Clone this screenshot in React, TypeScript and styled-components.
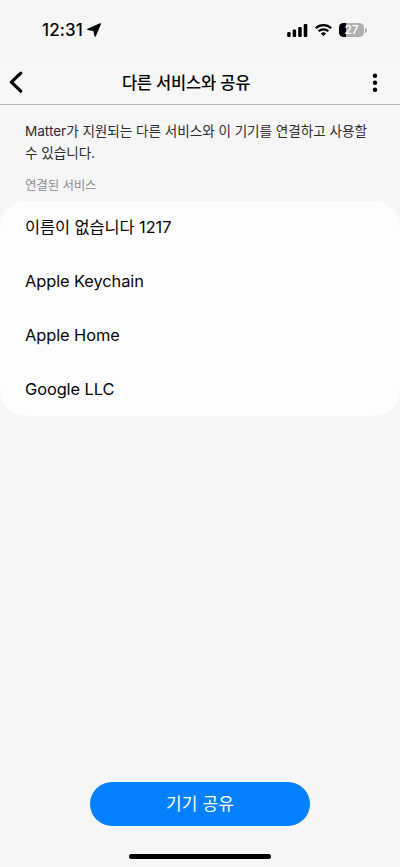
import React from "react";
import styled, { createGlobalStyle } from "styled-components";

const GlobalStyle = createGlobalStyle`
  * { box-sizing: border-box; }
  html, body { margin: 0; padding: 0; background: #f6f6f6; }
  body { font-family: Inter, "Noto Sans CJK KR", sans-serif; color: #050505; }
  button { font: inherit; color: inherit; border: 0; padding: 0; background: none; }
`;

const Screen = styled.div`
  width: 400px;
  height: 867px;
  display: flex;
  flex-direction: column;
  background: #f6f6f6;
  overflow: hidden;
`;

const StatusBar = styled.div`
  flex: none;
  height: 60px;
  padding: 0 33px 0 42px;
  display: flex;
  align-items: center;
  justify-content: space-between;
`;

const Clock = styled.div`
  display: flex;
  align-items: center;
  gap: 4px;
  font-size: 17px;
  font-weight: 500;
  letter-spacing: 0.1px;
  line-height: 20px;
`;

const Indicators = styled.div`
  display: flex;
  align-items: center;
  gap: 7px;
`;

const Battery = styled.div`
  display: flex;
  align-items: center;
  gap: 1px;
`;

const BatteryBody = styled.div`
  width: 25px;
  height: 14px;
  border-radius: 4.5px;
  background: linear-gradient(to right, #000 7px, #b0b0b0 7px);
  color: #fff;
  font-size: 12px;
  font-weight: 500;
  line-height: 14px;
  text-align: center;
`;

const BatteryTip = styled.div`
  width: 2px;
  height: 5px;
  border-radius: 0 2px 2px 0;
  background: #b0b0b0;
`;

const Header = styled.header`
  flex: none;
  height: 45px;
  padding: 0 17px 0 9px;
  display: grid;
  grid-template-columns: 24px 1fr 44px;
  align-items: center;
  background: #f7f7f7;
  border-bottom: 1px solid #b7b7b7;
`;

const IconButton = styled.button<{ $end?: boolean }>`
  height: 44px;
  display: flex;
  align-items: center;
  justify-content: ${(p) => (p.$end ? "flex-end" : "flex-start")};
`;

const Title = styled.h1`
  margin: 0;
  padding-top: 1px;
  font-size: 16.5px;
  font-weight: 500;
  line-height: 24px;
  letter-spacing: -0.2px;
  text-align: center;
  white-space: nowrap;
`;

const Description = styled.p`
  margin: 15px 0 0 25px;
  font-size: 13.6px;
  line-height: 22px;
  letter-spacing: -0.04px;
  color: #2b2b2b;
  white-space: nowrap;
`;

const SectionLabel = styled.h2`
  margin: 13px 0 0 25px;
  font-size: 12.5px;
  font-weight: 400;
  line-height: 18px;
  letter-spacing: -0.15px;
  color: #8c8c8c;
`;

const ServiceList = styled.ul`
  flex: none;
  margin: 6px 0 0;
  padding: 0;
  height: 215px;
  list-style: none;
  background: #fdfdfd;
  border-radius: 26px;
`;

const Service = styled.li`
  height: 54px;
  padding: 0 25px;
  font-size: 16.4px;
  line-height: 53px;
  letter-spacing: -0.08px;
`;

const Footer = styled.footer`
  margin-top: auto;
  display: flex;
  flex-direction: column;
  align-items: center;
  gap: 28px;
  padding-bottom: 8px;
`;

const ShareButton = styled.button`
  width: 220px;
  height: 44px;
  border-radius: 22px;
  background: #0381fe;
  color: #fff;
  font-size: 17px;
  line-height: 44px;
  letter-spacing: 0.1px;
`;

const HomeIndicator = styled.div`
  width: 142px;
  height: 5px;
  border-radius: 3px;
  background: #000;
`;

const services = ["이름이 없습니다 1217", "Apple Keychain", "Apple Home", "Google LLC"];

const LocationIcon = () => (
  <svg width="14" height="14" viewBox="0 0 14 14" stroke="#000" strokeWidth="1.4" strokeLinejoin="round">
    <path d="M13.2 .9 .9 6.4 6.9 7.3 8.2 13.1z" />
  </svg>
);

const SignalIcon = () => (
  <svg width="21" height="13" viewBox="0 0 21 13">
    <rect x="0.2" y="8" width="3.4" height="5" rx="1.1" />
    <rect x="5.7" y="5.6" width="3.4" height="7.4" rx="1.1" />
    <rect x="11.2" y="3" width="3.5" height="10" rx="1.1" />
    <rect x="16.7" y="0" width="3.6" height="13" rx="1.1" />
  </svg>
);

const WifiIcon = () => (
  <svg width="17" height="12" viewBox="0 0 17 12" fill="none" stroke="#000" strokeWidth="2.3">
    <path d="M.8 4.3a11 11 0 0 1 15.4 0" />
    <path d="M3.6 7.3a7 7 0 0 1 9.8 0" />
    <path d="m8.5 12-2.6-2.6a3.8 3.8 0 0 1 5.2 0z" fill="#000" stroke="none" />
  </svg>
);

const BackIcon = () => (
  <svg width="15" height="22" viewBox="0 0 15 22" fill="none" stroke="#000" strokeWidth="3.2" strokeLinecap="round" strokeLinejoin="round">
    <path d="M11.7 2.2 2.4 11.2 11.7 20.2" />
  </svg>
);

const MoreIcon = () => (
  <svg width="16" height="22" viewBox="0 0 16 22">
    <circle cx="8" cy="4.8" r="2.2" />
    <circle cx="8" cy="11.8" r="2.2" />
    <circle cx="8" cy="18.8" r="2.2" />
  </svg>
);

export default function App() {
  return (
    <>
      <GlobalStyle />
      <Screen>
        <StatusBar>
          <Clock>
            <span>12:31</span>
            <LocationIcon />
          </Clock>
          <Indicators>
            <SignalIcon />
            <WifiIcon />
            <Battery>
              <BatteryBody>27</BatteryBody>
              <BatteryTip />
            </Battery>
          </Indicators>
        </StatusBar>
        <Header>
          <IconButton aria-label="뒤로">
            <BackIcon />
          </IconButton>
          <Title>다른 서비스와 공유</Title>
          <IconButton aria-label="더보기" $end>
            <MoreIcon />
          </IconButton>
        </Header>
        <Description>
          Matter가 지원되는 다른 서비스와 이 기기를 연결하고 사용할
          <br />수 있습니다.
        </Description>
        <SectionLabel>연결된 서비스</SectionLabel>
        <ServiceList>
          {services.map((name) => (
            <Service key={name}>{name}</Service>
          ))}
        </ServiceList>
        <Footer>
          <ShareButton>기기 공유</ShareButton>
          <HomeIndicator />
        </Footer>
      </Screen>
    </>
  );
}
